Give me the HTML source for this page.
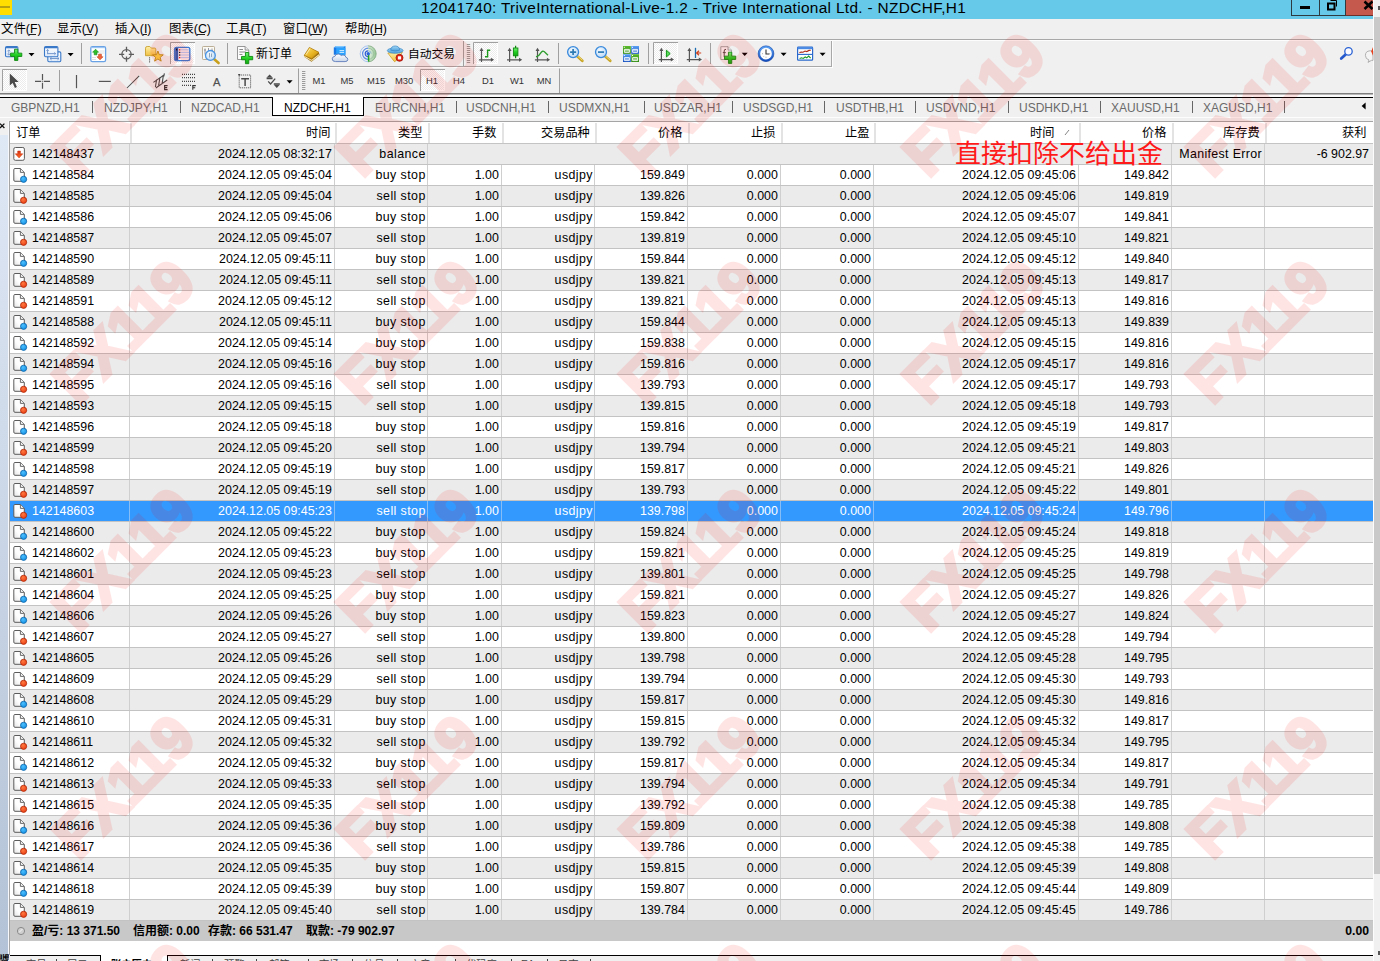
<!DOCTYPE html>
<html><head><meta charset="utf-8"><title>MT4 Terminal</title>
<style>
html,body{margin:0;padding:0}
body{width:1380px;height:961px;overflow:hidden;position:relative;background:#f0f0f0;font-family:"Liberation Sans",sans-serif;color:#000}
div,span,svg{position:absolute;box-sizing:border-box}
svg text{font-family:"Liberation Sans","Noto Sans CJK SC",sans-serif;white-space:pre}
.t{white-space:nowrap}
.title{left:0;top:0;width:1373px;height:19px;background:#67c9ea}
.title .cap{left:0;width:1387px;top:0;height:16px;line-height:16px;text-align:center;font-size:15.4px;letter-spacing:0.33px}
.row{left:10px;width:1363px;height:21px;border-bottom:1px solid #c3c3c3;font-size:12.4px;line-height:20px;white-space:nowrap}
.row.g{background:#ebebeb}
.row.w{background:#fff}
.row.s{background:#3399ff;color:#fff}
.row span{top:0;height:20px;text-align:right;padding-right:2.2px;border-right:1px solid #cfcfcf}
.row.s span{border-right-color:#86bdf6}
.row .c0{left:0;width:120px;text-align:left;padding-left:22px}
.row .c1{left:120px;width:205px}
.row .c2{left:325px;width:93px;letter-spacing:0.42px;padding-right:1.3px}
.row .c3{left:418px;width:74px}
.row .c4{left:492px;width:93px;letter-spacing:0.4px;padding-right:1.2px}
.row .c5{left:585px;width:93px}
.row .c6{left:678px;width:93px}
.row .c7{left:771px;width:93px}
.row .c8{left:864px;width:205px}
.row .c9{left:1069px;width:93px}
.row .c10{left:1162px;width:93px}
.row .c11{left:1255px;width:108px;border-right:none;padding-right:4px}
.row .m{left:418px;width:744px;border-right:1px solid #cfcfcf}
.hsep{top:123px;width:2px;height:20px;background:#e3e3e3}
.tab{top:100.6px;height:15px;line-height:15px;font-size:12px;color:#6a6a6a;white-space:nowrap}
.tsep{top:101px;width:1px;height:12px;background:#666}
.tf{top:74px;height:14px;line-height:14px;font-size:9.4px;color:#333;white-space:nowrap;text-align:center}
.wm{font-weight:bold;font-size:60px;line-height:60px;height:60px;width:220px;text-align:center;color:#f00;-webkit-text-stroke:3.6px #f00;opacity:0.102;transform:rotate(-45deg);white-space:nowrap;letter-spacing:-0.85px}
</style></head><body>
<div class="title"><div style="left:0;top:0;width:12px;height:15px;background:#ffde00"></div><div style="left:0;top:6px;width:10px;height:2px;background:#a08c14;opacity:0.75"></div><div class="cap t">12041740: TriveInternational-Live-1.2 - Trive International Ltd. - NZDCHF,H1</div><div style="left:1291px;top:0;width:29px;height:16px;border:1px solid #2d3a40;border-top:none"></div><div style="left:1319px;top:0;width:27px;height:16px;border:1px solid #2d3a40;border-top:none;border-left:none"></div><div style="left:1346px;top:0;width:27px;height:16px;background:#c5594e;border-bottom:1px solid #6b3029"></div><div style="left:1300px;top:6px;width:10px;height:3px;background:#000"></div><svg style="left:1325px;top:0" width="14" height="12" viewBox="0 0 14 12"><path d="M3 3.5h6.5v6h-6.5z" fill="none" stroke="#000" stroke-width="2"/><path d="M5.5 0.5h6v6" fill="none" stroke="#000" stroke-width="1"/></svg><svg style="left:1362px;top:0;overflow:hidden" width="11" height="12" viewBox="0 0 11 12"><path d="M2.5 1.5L10.5 9M10.5 1.5L2.5 9" stroke="#000" stroke-width="2.6" fill="none"/></svg></div><div style="left:1373px;top:0;width:1px;height:961px;background:#fcfcfc"></div><div style="left:1374px;top:0;width:6px;height:961px;background:#f0f0f0"></div><div style="left:1374px;top:17px;width:6px;height:857px;background:#c9c9c9"></div><div style="left:1378px;top:6px;width:2px;height:4px;background:#555"></div><div style="left:1378px;top:951px;width:2px;height:4px;background:#555"></div><svg style="position:absolute;left:0.60px;top:19.05px;overflow:visible" width="38.6" height="18.2" viewBox="0 -13.65 38.6 18.2"><text x="0" y="0" font-size="12.4" fill="#000">文件(F)</text></svg><div style="left:29.2px;top:34px;width:6.5px;height:1px;background:#222"></div><svg style="position:absolute;left:56.60px;top:19.05px;overflow:visible" width="38.8" height="18.2" viewBox="0 -13.65 38.8 18.2"><text x="0" y="0" font-size="12.4" fill="#000">显示(V)</text></svg><div style="left:85.2px;top:34px;width:6.7px;height:1px;background:#222"></div><svg style="position:absolute;left:114.60px;top:19.05px;overflow:visible" width="35.5" height="18.2" viewBox="0 -13.65 35.5 18.2"><text x="0" y="0" font-size="12.4" fill="#000">插入(I)</text></svg><div style="left:143.2px;top:34px;width:3.4px;height:1px;background:#222"></div><svg style="position:absolute;left:168.60px;top:19.05px;overflow:visible" width="39.6" height="18.2" viewBox="0 -13.65 39.6 18.2"><text x="0" y="0" font-size="12.4" fill="#000">图表(C)</text></svg><div style="left:197.2px;top:34px;width:7.5px;height:1px;background:#222"></div><svg style="position:absolute;left:225.60px;top:19.05px;overflow:visible" width="39.1" height="18.2" viewBox="0 -13.65 39.1 18.2"><text x="0" y="0" font-size="12.4" fill="#000">工具(T)</text></svg><div style="left:254.2px;top:34px;width:7.0px;height:1px;background:#222"></div><svg style="position:absolute;left:282.60px;top:19.05px;overflow:visible" width="42.4" height="18.2" viewBox="0 -13.65 42.4 18.2"><text x="0" y="0" font-size="12.4" fill="#000">窗口(W)</text></svg><div style="left:311.2px;top:34px;width:10.3px;height:1px;background:#222"></div><svg style="position:absolute;left:344.60px;top:19.05px;overflow:visible" width="40.6" height="18.2" viewBox="0 -13.65 40.6 18.2"><text x="0" y="0" font-size="12.4" fill="#000">帮助(H)</text></svg><div style="left:373.2px;top:34px;width:8.5px;height:1px;background:#222"></div><div style="left:0;top:39px;width:1373px;height:1px;background:#a8a8a8"></div><div style="left:0;top:40px;width:1373px;height:1px;background:#fdfdfd"></div><div style="left:0;top:66px;width:832px;height:1px;background:#a8a8a8"></div><div style="left:0;top:67px;width:833px;height:1px;background:#fdfdfd"></div><div style="left:831px;top:41px;width:1px;height:26px;background:#a8a8a8"></div><div style="left:832px;top:41px;width:1px;height:27px;background:#fdfdfd"></div><svg style="left:0;top:0" width="1380" height="96" viewBox="0 0 1380 96"><defs><pattern id="chk" width="2" height="2" patternUnits="userSpaceOnUse"><rect width="2" height="2" fill="#fff"/><rect width="1" height="1" fill="#ececec"/><rect x="1" y="1" width="1" height="1" fill="#ececec"/></pattern><linearGradient id="gp" x1="0" y1="0" x2="0" y2="1"><stop offset="0" stop-color="#7cf27c"/><stop offset="0.5" stop-color="#22d022"/><stop offset="1" stop-color="#12a812"/></linearGradient><linearGradient id="bw" x1="0" y1="0" x2="0" y2="1"><stop offset="0" stop-color="#ffffff"/><stop offset="1" stop-color="#dce9fa"/></linearGradient><linearGradient id="gold" x1="0" y1="0" x2="1" y2="1"><stop offset="0" stop-color="#fde27a"/><stop offset="0.55" stop-color="#e8b422"/><stop offset="1" stop-color="#b8820e"/></linearGradient><linearGradient id="fold" x1="0" y1="0" x2="0" y2="1"><stop offset="0" stop-color="#fff0a8"/><stop offset="1" stop-color="#f0c040"/></linearGradient><radialGradient id="lens" cx="0.4" cy="0.35" r="0.7"><stop offset="0" stop-color="#f4faff"/><stop offset="1" stop-color="#b8d8f6"/></radialGradient><linearGradient id="hat" x1="0" y1="0" x2="0" y2="1"><stop offset="0" stop-color="#a4d8f6"/><stop offset="1" stop-color="#4a9edc"/></linearGradient><linearGradient id="cld" x1="0" y1="0" x2="0" y2="1"><stop offset="0" stop-color="#ffffff"/><stop offset="1" stop-color="#c8d4e8"/></linearGradient><radialGradient id="sg" cx="0" cy="0.5" r="1"><stop offset="0" stop-color="#f4faf4"/><stop offset="1" stop-color="#8cc08c"/></radialGradient><linearGradient id="blu" x1="0" y1="0" x2="0" y2="1"><stop offset="0" stop-color="#5aa0f4"/><stop offset="1" stop-color="#1450c0"/></linearGradient><linearGradient id="grn" x1="0" y1="0" x2="0" y2="1"><stop offset="0" stop-color="#5cba2c"/><stop offset="1" stop-color="#2e8a10"/></linearGradient></defs><rect x="5.5" y="46.5" width="12.4" height="10.2" rx="1.2" fill="url(#bw)" stroke="#3a78c8" stroke-width="1.1"/><path d="M6 47.6h11.4" stroke="#3a78c8" stroke-width="1.4"/><path d="M8.8 50v5M7.3 51.4l1.5-1.6 1.5 1.6M7.3 53.6l1.5 1.6 1.5-1.6" fill="none" stroke="#7a9ac8" stroke-width="0.9"/><path d="M14.549999999999999 49.199999999999996h3.3v3.9499999999999997h3.9499999999999997v3.3h-3.9499999999999997v3.9499999999999997h-3.3v-3.9499999999999997h-3.9499999999999997v-3.3h3.9499999999999997z" fill="url(#gp)" stroke="#0e8a0e" stroke-width="0.9" stroke-linejoin="round"/><path d="M28.5 53h6l-3 3.2z" fill="#000"/><rect x="47.8" y="51.9" width="13" height="9.8" rx="1.2" fill="url(#bw)" stroke="#3a78c8" stroke-width="1.1"/><path d="M50 58.5h9M50 58.5l1.6-1.4M50 58.5l1.6 1.4M59 58.5l-1.6-1.4M59 58.5l-1.6 1.4" fill="none" stroke="#6a90c8" stroke-width="0.9"/><rect x="44.5" y="46.5" width="13.4" height="10.2" rx="1.2" fill="url(#bw)" stroke="#3a78c8" stroke-width="1.1"/><path d="M45 47.6h12.4" stroke="#3a78c8" stroke-width="1.4"/><path d="M47.6 49.6v4.6M46.4 50.8l1.2-1.3 1.2 1.3M47.6 53.6h8M54.4 52.4l1.3 1.2-1.3 1.2" fill="none" stroke="#6a90c8" stroke-width="0.9"/><path d="M67.6 53h6l-3 3.2z" fill="#000"/><path d="M81.5 43V64" stroke="#a0a0a0" stroke-width="1"/><rect x="90.8" y="46.6" width="14.8" height="15" rx="1.6" fill="#fff" stroke="#6aa2e6" stroke-width="1.3"/><path d="M91.4 47.6h13.6" stroke="#9cc4f2" stroke-width="1.2"/><path d="M99.5 51h5M99.5 53h5M92 57.5h4M92 59.5h4" stroke="#d8d8d8" stroke-width="0.8"/><path d="M95.6 49.2l3 3h-1.6v2.6h-2.8v-2.6h-1.6z" fill="#2cc02c" stroke="#148a14" stroke-width="0.6"/><path d="M100 59.8l-3-3h1.6v-2.6h2.8v2.6h1.6z" fill="#f4643c" stroke="#c03a10" stroke-width="0.6"/><circle cx="126.5" cy="54.3" r="4.6" fill="none" stroke="#5c5c5c" stroke-width="1.3"/><path d="M119 54.3h5.2M128.8 54.3h5.2M126.5 46.8v5.2M126.5 56.6v5.2" stroke="#5c5c5c" stroke-width="1.3"/><path d="M145.5 48.2q0-1.7 1.7-1.7h2.6l1.6 1.6h3.4q1 0 1 1v6.6h-10.3z" fill="url(#fold)" stroke="#c8a030" stroke-width="0.9"/><path d="M149.6 57.4v5" stroke="#333" stroke-width="1" stroke-dasharray="1 1"/><polygon points="157.90,51.00 159.31,54.66 163.23,54.87 160.18,57.34 161.19,61.13 157.90,59.00 154.61,61.13 155.62,57.34 152.57,54.87 156.49,54.66" fill="#f8d248" stroke="#b88a14" stroke-width="0.9" stroke-linejoin="round"/><rect x="170" y="42" width="25" height="22" fill="url(#chk)"/><path d="M170.5 64V42.5H195" fill="none" stroke="#a0a0a0" stroke-width="1"/><path d="M194.5 43V63.5H171" fill="none" stroke="#fff" stroke-width="1"/><rect x="174.6" y="47.4" width="15.2" height="13.2" rx="1.8" fill="#fbeeee" stroke="#3a7ad4" stroke-width="1.4"/><rect x="175.2" y="48" width="3" height="12" fill="#2c5cb4"/><path d="M180.5 49.8h8.6M180.5 52.4h8.6M180.5 55h8.6M180.5 57.6h8.6" stroke="#a8c0f4" stroke-width="0.9"/><rect x="179" y="49.2" width="1.3" height="1.3" fill="#e02020"/><rect x="179" y="51.8" width="1.3" height="1.3" fill="#222"/><rect x="179" y="54.4" width="1.3" height="1.3" fill="#222"/><rect x="179" y="57" width="1.3" height="1.3" fill="#e02020"/><rect x="176" y="48.8" width="1.2" height="1.6" fill="#111"/><rect x="202.5" y="46.5" width="12" height="13" rx="0.8" fill="#fbfaf4" stroke="#b4a68c" stroke-width="0.9"/><path d="M205 48.5v6M208.5 48v4M212 48.5v5M204 50h2M211 50.5h2" stroke="#8a8a96" stroke-width="0.9"/><path d="M214 59l4.6 4" stroke="#c8a01c" stroke-width="2.6" stroke-linecap="round"/><circle cx="210.4" cy="55.4" r="4.9" fill="url(#lens)" fill-opacity="0.88" stroke="#4a94e4" stroke-width="1.3"/><path d="M209.5 53v4.5M211.5 53.5v3.5" stroke="#8aa4c0" stroke-width="1"/><path d="M227.5 43V64" stroke="#a0a0a0" stroke-width="1"/><path d="M237.5 46.5h7.6l3.6 3.6v9.4h-11.2z" fill="#fcfcfc" stroke="#8c8c8c" stroke-width="0.9"/><path d="M245.1 46.5v3.6h3.6" fill="#e8e8e8" stroke="#8c8c8c" stroke-width="0.9"/><path d="M239.4 49.5h3.6M239.4 52h6.5M239.4 54.5h3" stroke="#8a8a8a" stroke-width="1"/><path d="M245.45 52.5h3.3v3.9499999999999997h3.9499999999999997v3.3h-3.9499999999999997v3.9499999999999997h-3.3v-3.9499999999999997h-3.9499999999999997v-3.3h3.9499999999999997z" fill="url(#gp)" stroke="#0e8a0e" stroke-width="0.9" stroke-linejoin="round"/><path d="M304.1 55.6l5.3-8.2 9.3 4.7 1 3.2-8.2 6.4-7.4-5z" fill="#9a6a0c"/><path d="M304.3 56.2l7.4 4.2 7.4-5.6" fill="none" stroke="#f6e6b0" stroke-width="1.1"/><path d="M309.4 47.4l9.3 4.8-6.9 6.5-7.5-3.4z" fill="url(#gold)" stroke="#b07c0c" stroke-width="0.6" stroke-linejoin="round"/><path d="M310 48.6l-4 6" stroke="#fff4c0" stroke-width="0.8"/><path d="M333.8 47.4l2.4-1.3h9.2v8.6h-11.6z" fill="#1c78e4"/><path d="M336.2 47.6h9.2v8h-9.2z" fill="#2aa2ff"/><path d="M333.8 47.4l2.4-1.3h9.2l-2 1.4z" fill="#7cc8ff"/><path d="M339.5 50.6h4.6M339.5 52.4h4.6" stroke="#e4f4ff" stroke-width="0.9"/><path d="M335.6 61.6q-3.4 0-3.4-2.7 0-2.3 2.7-2.6 0.7-2.3 3.3-2.3 2 0 3 1.5 0.9-0.5 1.9-0.5 2.5 0 2.8 2.3 1.9 0.4 1.9 2.1 0 2.2-2.7 2.2z" fill="url(#cld)" stroke="#5c7cba" stroke-width="0.9"/><path d="M368.2 45.8a8 8 0 0 1 0 16z" fill="url(#sg)"/><g fill="none"><path d="M368.2 45.8a8 8 0 0 0 0 16" stroke="#a8c4f0" stroke-width="1"/><path d="M368.2 48.2a5.6 5.6 0 0 0 0 11.2" stroke="#5a8ae4" stroke-width="1.2"/><path d="M368.2 50.8a3 3 0 0 0 0 6" stroke="#2a5cd4" stroke-width="1.2"/><path d="M368.2 45.8a8 8 0 0 1 0 16" stroke="#8ab08a" stroke-width="0.9"/><path d="M368.2 48.2a5.6 5.6 0 0 1 0 11.2" stroke="#9cc09c" stroke-width="0.9"/><path d="M368.2 50.8a3 3 0 0 1 3 3" stroke="#8ab4c8" stroke-width="0.9"/><path d="M368.6 54v7.6" stroke="#22a422" stroke-width="1.5"/></g><circle cx="368.2" cy="53.8" r="1.7" fill="#2a60d8"/><path d="M387.8 53l6.3 8.3q0.6 0.7 1.3 0l7-9z" fill="url(#fold)" stroke="#c89a18" stroke-width="0.7"/><ellipse cx="395.2" cy="50.6" rx="7.9" ry="2.7" fill="url(#hat)" stroke="#3a86c4" stroke-width="0.7"/><path d="M390.7 50.2q0.3-4.2 4.5-4.2t4.5 4.2q-4.5 1.7-9 0z" fill="url(#hat)" stroke="#3a86c4" stroke-width="0.7"/><circle cx="399.5" cy="57.8" r="3.5" fill="#e42414" stroke="#a01206" stroke-width="0.8"/><rect x="397.9" y="56.2" width="3.2" height="3.2" rx="0.4" fill="#fff"/><path d="M463.5 41V66" stroke="#a0a0a0" stroke-width="1"/><path d="M466.8 44.5h3.4M466.8 46.5h3.4M466.8 48.5h3.4M466.8 50.5h3.4M466.8 52.5h3.4M466.8 54.5h3.4M466.8 56.5h3.4M466.8 58.5h3.4M466.8 60.5h3.4M466.8 62.5h3.4" stroke="#9a9a9a" stroke-width="1"/><rect x="473" y="42" width="25" height="22" fill="url(#chk)"/><path d="M473.5 64V42.5H498" fill="none" stroke="#a0a0a0" stroke-width="1"/><path d="M497.5 43V63.5H474" fill="none" stroke="#fff" stroke-width="1"/><path d="M481.5 49.5V62M478.9 59.8H492.0" fill="none" stroke="#555" stroke-width="1.2"/><path d="M479.5 51L481.5 47.8L483.5 51zM490.9 57.8L494.1 59.8L490.9 61.8z" fill="#555"/><path d="M487.6 49.6v8M487.6 50.2h2.6M487.6 56.8h-2.6" fill="none" stroke="#1c9a1c" stroke-width="1.4"/><path d="M509.6 49.5V62M507.0 59.8H520.1" fill="none" stroke="#555" stroke-width="1.2"/><path d="M507.6 51L509.6 47.8L511.6 51zM519.0 57.8L522.2 59.8L519.0 61.8z" fill="#555"/><path d="M515.6 45.8v12.4" stroke="#0e8a0e" stroke-width="1.2"/><rect x="513.4" y="48" width="4.5" height="7.8" fill="url(#gp)" stroke="#0e8a0e" stroke-width="0.9"/><path d="M537.5 49.5V62M534.9 59.8H548.0" fill="none" stroke="#555" stroke-width="1.2"/><path d="M535.5 51L537.5 47.8L539.5 51zM546.9 57.8L550.1 59.8L546.9 61.8z" fill="#555"/><path d="M536 56.8q3.4-1 5.2-4.4 1.4-2 3.2-0.6l3.6 3.4" fill="none" stroke="#2c9c2c" stroke-width="1.3"/><path d="M558.5 43V64" stroke="#a0a0a0" stroke-width="1"/><path d="M576.7 55.8l5.6 5" stroke="#c8a424" stroke-width="2.8" stroke-linecap="round"/><path d="M577.1 55.6l5 4.4" stroke="#f0dc7c" stroke-width="0.9" stroke-linecap="round"/><circle cx="573.1" cy="52.1" r="5.5" fill="url(#lens)" stroke="#3a8adc" stroke-width="1.3"/><path d="M570.1 52.1h6M573.1 49.1v6" stroke="#2c7ab4" stroke-width="1.7"/><path d="M604.6 55.8l5.6 5" stroke="#c8a424" stroke-width="2.8" stroke-linecap="round"/><path d="M605.0 55.6l5 4.4" stroke="#f0dc7c" stroke-width="0.9" stroke-linecap="round"/><circle cx="601.0" cy="52.1" r="5.5" fill="url(#lens)" stroke="#3a8adc" stroke-width="1.3"/><path d="M598.0 52.1h6" stroke="#2c7ab4" stroke-width="1.7"/><rect x="623" y="46" width="7.8" height="7.8" fill="url(#grn)"/><path d="M624.4 49.4h5v3h-5zM624.4 50.9h5" fill="none" stroke="#fff" stroke-width="0.9"/><rect x="623.8" y="46.8" width="1" height="1" fill="#fff"/><rect x="631.2" y="46" width="7.8" height="7.8" fill="url(#blu)"/><path d="M632.6 49.4h5v3h-5zM632.6 50.9h5" fill="none" stroke="#fff" stroke-width="0.9"/><rect x="632.0" y="46.8" width="1" height="1" fill="#fff"/><rect x="623" y="54.2" width="7.8" height="7.8" fill="url(#blu)"/><path d="M624.4 57.6h5v3h-5zM624.4 59.1h5" fill="none" stroke="#fff" stroke-width="0.9"/><rect x="623.8" y="55.0" width="1" height="1" fill="#fff"/><rect x="631.2" y="54.2" width="7.8" height="7.8" fill="url(#grn)"/><path d="M632.6 57.6h5v3h-5zM632.6 59.1h5" fill="none" stroke="#fff" stroke-width="0.9"/><rect x="632.0" y="55.0" width="1" height="1" fill="#fff"/><path d="M648.5 43V64" stroke="#a0a0a0" stroke-width="1"/><rect x="653" y="42" width="25" height="22" fill="url(#chk)"/><path d="M653.5 64V42.5H678" fill="none" stroke="#a0a0a0" stroke-width="1"/><path d="M677.5 43V63.5H654" fill="none" stroke="#fff" stroke-width="1"/><path d="M661.4 49.5V62M658.8 59.6H671.9" fill="none" stroke="#555" stroke-width="1.2"/><path d="M659.4 51L661.4 47.8L663.4 51zM670.8 57.6L674.0 59.6L670.8 61.6z" fill="#555"/><path d="M666.4 50.2v6.8l3.8-3.4z" fill="#5ade5a" stroke="#14961a" stroke-width="1"/><path d="M689.4 49.5V62M686.8 59.6H699.9" fill="none" stroke="#555" stroke-width="1.2"/><path d="M687.4 51L689.4 47.8L691.4 51zM698.8 57.6L702.0 59.6L698.8 61.6z" fill="#555"/><path d="M695.5 47.8v10.2" stroke="#1c6ab0" stroke-width="1.3"/><path d="M696.8 53h4.4M699 50.8l-2.4 2.2 2.4 2.2" fill="none" stroke="#d0401c" stroke-width="1.2"/><path d="M710.5 43V64" stroke="#a0a0a0" stroke-width="1"/><path d="M720.8 46.7h7.2l3.4 3.4v9.4h-10.6z" fill="#faf4f4" stroke="#9a9a9a" stroke-width="0.9"/><path d="M728 46.7v3.4h3.4" fill="#e8e8e8" stroke="#9a9a9a" stroke-width="0.9"/><path d="M726 49.4q-1.8-0.4-1.8 1.6v6M722.8 52.6h3" fill="none" stroke="#5a4a4a" stroke-width="1"/><path d="M728.45 52.199999999999996h3.3v3.9499999999999997h3.9499999999999997v3.3h-3.9499999999999997v3.9499999999999997h-3.3v-3.9499999999999997h-3.9499999999999997v-3.3h3.9499999999999997z" fill="url(#gp)" stroke="#0e8a0e" stroke-width="0.9" stroke-linejoin="round"/><path d="M741.7 52.8h6l-3 3.2z" fill="#000"/><circle cx="766" cy="53.7" r="6.9" fill="#fdfdfd" stroke="url(#blu)" stroke-width="2.1"/><circle cx="766" cy="53.7" r="7.9" fill="none" stroke="#0c3c9c" stroke-width="0.5"/><path d="M766 49.4v4.6h3.4" fill="none" stroke="#333" stroke-width="1.1"/><path d="M762 53.7h0.8M766 57.6v-0.8M769.4 53.7h0.8M763.4 56.8l0.5-0.5" stroke="#888" stroke-width="0.8"/><path d="M780.6 52.8h6l-3 3.2z" fill="#000"/><rect x="797.6" y="47.2" width="15" height="13" rx="0.8" fill="#fff" stroke="#2a68cc" stroke-width="1.2"/><path d="M797.6 48.2h15" stroke="#4a8ae4" stroke-width="2"/><path d="M797.6 54.4h15" stroke="#2a68cc" stroke-width="1.1"/><path d="M799.4 52.6l2-0.6 1.6 0.2 2-1.2 1.8 0.6 2.2-1.2 1.8-0.2" fill="none" stroke="#b02a14" stroke-width="1.1"/><path d="M799.6 58.6l2-0.8 1.6 0.6 2-1.4 1.6 0.8 1.8-1.8 2 2" fill="none" stroke="#1c9c2c" stroke-width="1.1"/><path d="M819.6 52.8h6l-3 3.2z" fill="#000"/><path d="M1345.6 54.4l-4.4 4.2" stroke="#2458cc" stroke-width="2.7" stroke-linecap="round"/><circle cx="1348.5" cy="51.4" r="3.7" fill="#fbfbff" stroke="#2a62d4" stroke-width="1.3"/><path d="M1373 50.8h-3q-4.6 0.4-4.6 4.6 0 3.6 3.6 4.6l-1 2.4 3.4-2h1.6z" fill="#f4f4f4" stroke="#a8a8a8" stroke-width="0.9"/><path d="M1373 47l-1.8 4.6 1.8 4.2z" fill="#e8401c"/><rect x="2" y="69" width="25" height="22" fill="url(#chk)"/><path d="M2.5 91V69.5H27" fill="none" stroke="#a0a0a0" stroke-width="1"/><path d="M26.5 70V90.5H3" fill="none" stroke="#fff" stroke-width="1"/><path d="M9.8 73.6v12l2.9-2.7 2.2 5 2-0.9-2.2-4.9h4z" fill="#4a4a4a"/><path d="M35 81.4h6.2M43.8 81.4h6.2M42.5 74v6.2M42.5 82.8v6" stroke="#555" stroke-width="1.2"/><rect x="42" y="81" width="1" height="1" fill="#888"/><path d="M59.5 70V91" stroke="#a0a0a0" stroke-width="1"/><path d="M76.5 75v13.2" stroke="#555" stroke-width="1.2"/><path d="M98.8 81.4h12" stroke="#555" stroke-width="1.2"/><path d="M127 88l12.2-12.2" stroke="#4a4a4a" stroke-width="1.05"/><path d="M153.4 82.4l11-7.6M155.8 88l11.4-8M156.6 79.6l-1.2 7.4M160 77.4l-1.4 8M163.4 75.2l-1.2 8M164.4 73.4l-0.6 3" fill="none" stroke="#4a4a4a" stroke-width="1.1"/><path d="M167.6 85.6h-3v4h3M164.6 87.6h2.6" fill="none" stroke="#333" stroke-width="1.1"/><path d="M182 74.4h13M182 77.6h13M182 81.4h13M182 85.4h9.4" stroke="#444" stroke-width="1.1" stroke-dasharray="1 1"/><path d="M192.8 89.8v-4.2h3M192.8 87.7h2.4" fill="none" stroke="#333" stroke-width="1.1"/><rect x="239.2" y="75" width="11.4" height="12.8" fill="none" stroke="#444" stroke-width="1" stroke-dasharray="1 1"/><rect x="238.2" y="74" width="2" height="1.4" fill="#444"/><path d="M241.2 78.7h7.8M245.1 78.7v7.2" stroke="#4a4a4a" stroke-width="1.5"/><path d="M269.6 74.4l3 3.2h-6zM276.8 88l-3-3.2h6z" fill="#4a4a4a"/><path d="M266.6 77.6h6v1.6h-6zM273.8 83.2h6v1.6h-6z" fill="#4a4a4a"/><path d="M268.2 81.4l2.4 2.6 4.6-5.4" fill="none" stroke="#4a4a4a" stroke-width="1.3"/><path d="M286.6 80.2h6l-3 3.2z" fill="#000"/><path d="M298.5 68.5V93" stroke="#a0a0a0" stroke-width="1"/><path d="M302 71.5h3.4M302 73.5h3.4M302 75.5h3.4M302 77.5h3.4M302 79.5h3.4M302 81.5h3.4M302 83.5h3.4M302 85.5h3.4M302 87.5h3.4M302 89.5h3.4" stroke="#9a9a9a" stroke-width="1"/><rect x="420" y="69" width="25" height="22" fill="url(#chk)"/><path d="M420.5 91V69.5H445" fill="none" stroke="#a0a0a0" stroke-width="1"/><path d="M444.5 70V90.5H421" fill="none" stroke="#fff" stroke-width="1"/><path d="M559.5 68.5V93" stroke="#a0a0a0" stroke-width="1"/></svg><svg width="0" height="0" style="left:0;top:0"><defs><linearGradient id="pg" x1="1" y1="0" x2="0" y2="1"><stop offset="0" stop-color="#fff"/><stop offset="0.6" stop-color="#fdfdfd"/><stop offset="1" stop-color="#e2e2e2"/></linearGradient><radialGradient id="bc" cx="0.4" cy="0.35" r="0.75"><stop offset="0" stop-color="#4cc0ff"/><stop offset="1" stop-color="#108ae0"/></radialGradient><radialGradient id="rc" cx="0.4" cy="0.35" r="0.75"><stop offset="0" stop-color="#ff7a40"/><stop offset="1" stop-color="#e83810"/></radialGradient><linearGradient id="ra" x1="0" y1="0" x2="0" y2="1"><stop offset="0" stop-color="#d83010"/><stop offset="1" stop-color="#ff6a28"/></linearGradient></defs></svg><div class="t" style="left:210.7px;top:74px;width:12px;height:16px;line-height:16px;text-align:center;font-size:11.2px;color:#505050;-webkit-text-stroke:0.25px #505050">A</div><svg style="position:absolute;left:255.60px;top:44.70px;overflow:visible" width="36.3" height="16.9" viewBox="0 -12.71 36.3 16.9"><text x="0" y="0" font-size="12" fill="#000">新订单</text></svg><svg style="position:absolute;left:408.20px;top:44.70px;overflow:visible" width="47.4" height="16.9" viewBox="0 -12.71 47.4 16.9"><text x="0" y="0" font-size="11.8" fill="#000">自动交易</text></svg><div class="tf" style="left:304px;width:30px">M1</div><div class="tf" style="left:332px;width:30px">M5</div><div class="tf" style="left:361px;width:30px">M15</div><div class="tf" style="left:389px;width:30px">M30</div><div class="tf" style="left:417px;width:30px">H1</div><div class="tf" style="left:444px;width:30px">H4</div><div class="tf" style="left:473px;width:30px">D1</div><div class="tf" style="left:502px;width:30px">W1</div><div class="tf" style="left:529px;width:30px">MN</div><div style="left:0;top:93px;width:1373px;height:1px;background:#7f7f7f"></div><div style="left:0;top:94px;width:1373px;height:1px;background:#b9b9b9"></div><div style="left:0;top:95px;width:1373px;height:2px;background:#fbfbfb"></div><div style="left:0;top:97px;width:1373px;height:1px;background:#000"></div><div style="left:0;top:117px;width:1373px;height:1px;background:#fdfdfd"></div><div style="left:273px;top:95px;width:90px;height:3px;background:#fff"></div><div style="left:272px;top:97px;width:92px;height:19px;background:#fff;border:1px solid #000;border-top:none"></div><div class="tab" style="left:11px;">GBPNZD,H1</div><div class="tab" style="left:104px;">NZDJPY,H1</div><div class="tab" style="left:191px;">NZDCAD,H1</div><div class="tab" style="left:284px;color:#000;">NZDCHF,H1</div><div class="tab" style="left:375px;">EURCNH,H1</div><div class="tab" style="left:466px;">USDCNH,H1</div><div class="tab" style="left:559px;">USDMXN,H1</div><div class="tab" style="left:654px;">USDZAR,H1</div><div class="tab" style="left:743px;">USDSGD,H1</div><div class="tab" style="left:836px;">USDTHB,H1</div><div class="tab" style="left:926px;">USDVND,H1</div><div class="tab" style="left:1019px;">USDHKD,H1</div><div class="tab" style="left:1111px;">XAUUSD,H1</div><div class="tab" style="left:1203px;">XAGUSD,H1</div><div class="tsep" style="left:92px"></div><div class="tsep" style="left:180px"></div><div class="tsep" style="left:456px"></div><div class="tsep" style="left:548px"></div><div class="tsep" style="left:644px"></div><div class="tsep" style="left:732px"></div><div class="tsep" style="left:824px"></div><div class="tsep" style="left:915px"></div><div class="tsep" style="left:1008px"></div><div class="tsep" style="left:1100px"></div><div class="tsep" style="left:1192px"></div><div class="tsep" style="left:1284px"></div><svg style="left:1361px;top:102px" width="6" height="8" viewBox="0 0 6 8"><path d="M4.6 0.6L0.6 4L4.6 7.4z" fill="#000"/></svg><div style="left:0;top:135px;width:8px;height:826px;background:linear-gradient(#dfe8f5,#b3c2d6)"></div><div style="left:8px;top:121px;width:1px;height:840px;background:#f6f8fb"></div><svg style="left:0;top:121px" width="8" height="10" viewBox="0 0 8 10"><path d="M0 2.6L4.4 7M4.4 2.6L0 7" stroke="#111" stroke-width="1.3" fill="none"/></svg><div style="left:9px;top:121px;width:1364px;height:834px;background:#fff;border-left:1px solid #a5a5a5;border-top:1px solid #a5a5a5"></div><div style="left:10px;top:143px;width:1363px;height:1px;background:#c4c4c4"></div><svg style="position:absolute;left:16.00px;top:123.76px;overflow:visible" width="24.4" height="17.9" viewBox="0 -13.44 24.4 17.9"><text x="0" y="0" font-size="12.2" fill="#000">订单</text></svg><svg style="position:absolute;left:305.60px;top:123.76px;overflow:visible" width="24.4" height="17.9" viewBox="0 -13.44 24.4 17.9"><text x="0" y="0" font-size="12.2" fill="#000">时间</text></svg><svg style="position:absolute;left:398.30px;top:123.76px;overflow:visible" width="24.4" height="17.9" viewBox="0 -13.44 24.4 17.9"><text x="0" y="0" font-size="12.2" fill="#000">类型</text></svg><svg style="position:absolute;left:472.20px;top:123.76px;overflow:visible" width="24.4" height="17.9" viewBox="0 -13.44 24.4 17.9"><text x="0" y="0" font-size="12.2" fill="#000">手数</text></svg><svg style="position:absolute;left:541.20px;top:123.76px;overflow:visible" width="48.8" height="17.9" viewBox="0 -13.44 48.8 17.9"><text x="0" y="0" font-size="12.2" fill="#000">交易品种</text></svg><svg style="position:absolute;left:658.30px;top:123.76px;overflow:visible" width="24.4" height="17.9" viewBox="0 -13.44 24.4 17.9"><text x="0" y="0" font-size="12.2" fill="#000">价格</text></svg><svg style="position:absolute;left:751.30px;top:123.76px;overflow:visible" width="24.4" height="17.9" viewBox="0 -13.44 24.4 17.9"><text x="0" y="0" font-size="12.2" fill="#000">止损</text></svg><svg style="position:absolute;left:844.90px;top:123.76px;overflow:visible" width="24.4" height="17.9" viewBox="0 -13.44 24.4 17.9"><text x="0" y="0" font-size="12.2" fill="#000">止盈</text></svg><svg style="position:absolute;left:1029.60px;top:123.76px;overflow:visible" width="24.4" height="17.9" viewBox="0 -13.44 24.4 17.9"><text x="0" y="0" font-size="12.2" fill="#000">时间</text></svg><svg style="position:absolute;left:1142.10px;top:123.76px;overflow:visible" width="24.4" height="17.9" viewBox="0 -13.44 24.4 17.9"><text x="0" y="0" font-size="12.2" fill="#000">价格</text></svg><svg style="position:absolute;left:1223.40px;top:123.76px;overflow:visible" width="36.6" height="17.9" viewBox="0 -13.44 36.6 17.9"><text x="0" y="0" font-size="12.2" fill="#000">库存费</text></svg><svg style="position:absolute;left:1341.90px;top:123.76px;overflow:visible" width="24.4" height="17.9" viewBox="0 -13.44 24.4 17.9"><text x="0" y="0" font-size="12.2" fill="#000">获利</text></svg><div class="hsep" style="left:130px"></div><div class="hsep" style="left:335px"></div><div class="hsep" style="left:428px"></div><div class="hsep" style="left:502px"></div><div class="hsep" style="left:595px"></div><div class="hsep" style="left:688px"></div><div class="hsep" style="left:781px"></div><div class="hsep" style="left:874px"></div><div class="hsep" style="left:1079px"></div><div class="hsep" style="left:1172px"></div><div class="hsep" style="left:1265px"></div><svg style="left:1064px;top:129px" width="6" height="7" viewBox="0 0 6 7"><path d="M1 6L5 1" stroke="#777" stroke-width="0.9"/></svg><div class="row g" style="top:144px"><svg style="left:2px;top:2px" width="17" height="17" viewBox="0 0 17 17"><rect x="1.8" y="1.5" width="10.6" height="12.8" rx="1.6" fill="#fff" stroke="#5c5c5c"/><path d="M5.7 5h2.7v2.8h2.4l-3.75 4.1-3.75-4.1h2.4z" fill="url(#ra)" stroke="#c02c08" stroke-width="0.5"/></svg><span class="c0">142148437</span><span class="c1">2024.12.05 08:32:17</span><span class="c2">balance</span><span class="m"></span><span class="c10" style="padding-right:2px;letter-spacing:0.35px">Manifest Error</span><span class="c11">-6 902.97</span></div>
<div class="row w" style="top:165px"><svg style="left:2px;top:2px" width="17" height="17" viewBox="0 0 17 17"><path d="M3 1.5h5.4l3.9 3.9v7.7q0 1.2-1.2 1.2h-8.1q-1.2 0-1.2-1.2v-10.4q0-1.2 1.2-1.2z" fill="url(#pg)" stroke="#5c5c5c"/><path d="M8.4 1.7v3.7h3.7" fill="#f4f4f4" stroke="#5c5c5c" stroke-width="0.9"/><circle cx="11.6" cy="12.3" r="3.1" fill="url(#bc)" stroke="#0c64a8" stroke-width="0.8"/></svg><span class="c0">142148584</span><span class="c1">2024.12.05 09:45:04</span><span class="c2">buy stop</span><span class="c3">1.00</span><span class="c4">usdjpy</span><span class="c5">159.849</span><span class="c6">0.000</span><span class="c7">0.000</span><span class="c8">2024.12.05 09:45:06</span><span class="c9">149.842</span><span class="c10"></span><span class="c11"></span></div>
<div class="row g" style="top:186px"><svg style="left:2px;top:2px" width="17" height="17" viewBox="0 0 17 17"><path d="M3 1.5h5.4l3.9 3.9v7.7q0 1.2-1.2 1.2h-8.1q-1.2 0-1.2-1.2v-10.4q0-1.2 1.2-1.2z" fill="url(#pg)" stroke="#5c5c5c"/><path d="M8.4 1.7v3.7h3.7" fill="#f4f4f4" stroke="#5c5c5c" stroke-width="0.9"/><circle cx="11.6" cy="12.3" r="3.1" fill="url(#rc)" stroke="#b02808" stroke-width="0.8"/></svg><span class="c0">142148585</span><span class="c1">2024.12.05 09:45:04</span><span class="c2">sell stop</span><span class="c3">1.00</span><span class="c4">usdjpy</span><span class="c5">139.826</span><span class="c6">0.000</span><span class="c7">0.000</span><span class="c8">2024.12.05 09:45:06</span><span class="c9">149.819</span><span class="c10"></span><span class="c11"></span></div>
<div class="row w" style="top:207px"><svg style="left:2px;top:2px" width="17" height="17" viewBox="0 0 17 17"><path d="M3 1.5h5.4l3.9 3.9v7.7q0 1.2-1.2 1.2h-8.1q-1.2 0-1.2-1.2v-10.4q0-1.2 1.2-1.2z" fill="url(#pg)" stroke="#5c5c5c"/><path d="M8.4 1.7v3.7h3.7" fill="#f4f4f4" stroke="#5c5c5c" stroke-width="0.9"/><circle cx="11.6" cy="12.3" r="3.1" fill="url(#bc)" stroke="#0c64a8" stroke-width="0.8"/></svg><span class="c0">142148586</span><span class="c1">2024.12.05 09:45:06</span><span class="c2">buy stop</span><span class="c3">1.00</span><span class="c4">usdjpy</span><span class="c5">159.842</span><span class="c6">0.000</span><span class="c7">0.000</span><span class="c8">2024.12.05 09:45:07</span><span class="c9">149.841</span><span class="c10"></span><span class="c11"></span></div>
<div class="row g" style="top:228px"><svg style="left:2px;top:2px" width="17" height="17" viewBox="0 0 17 17"><path d="M3 1.5h5.4l3.9 3.9v7.7q0 1.2-1.2 1.2h-8.1q-1.2 0-1.2-1.2v-10.4q0-1.2 1.2-1.2z" fill="url(#pg)" stroke="#5c5c5c"/><path d="M8.4 1.7v3.7h3.7" fill="#f4f4f4" stroke="#5c5c5c" stroke-width="0.9"/><circle cx="11.6" cy="12.3" r="3.1" fill="url(#rc)" stroke="#b02808" stroke-width="0.8"/></svg><span class="c0">142148587</span><span class="c1">2024.12.05 09:45:07</span><span class="c2">sell stop</span><span class="c3">1.00</span><span class="c4">usdjpy</span><span class="c5">139.819</span><span class="c6">0.000</span><span class="c7">0.000</span><span class="c8">2024.12.05 09:45:10</span><span class="c9">149.821</span><span class="c10"></span><span class="c11"></span></div>
<div class="row w" style="top:249px"><svg style="left:2px;top:2px" width="17" height="17" viewBox="0 0 17 17"><path d="M3 1.5h5.4l3.9 3.9v7.7q0 1.2-1.2 1.2h-8.1q-1.2 0-1.2-1.2v-10.4q0-1.2 1.2-1.2z" fill="url(#pg)" stroke="#5c5c5c"/><path d="M8.4 1.7v3.7h3.7" fill="#f4f4f4" stroke="#5c5c5c" stroke-width="0.9"/><circle cx="11.6" cy="12.3" r="3.1" fill="url(#bc)" stroke="#0c64a8" stroke-width="0.8"/></svg><span class="c0">142148590</span><span class="c1">2024.12.05 09:45:11</span><span class="c2">buy stop</span><span class="c3">1.00</span><span class="c4">usdjpy</span><span class="c5">159.844</span><span class="c6">0.000</span><span class="c7">0.000</span><span class="c8">2024.12.05 09:45:12</span><span class="c9">149.840</span><span class="c10"></span><span class="c11"></span></div>
<div class="row g" style="top:270px"><svg style="left:2px;top:2px" width="17" height="17" viewBox="0 0 17 17"><path d="M3 1.5h5.4l3.9 3.9v7.7q0 1.2-1.2 1.2h-8.1q-1.2 0-1.2-1.2v-10.4q0-1.2 1.2-1.2z" fill="url(#pg)" stroke="#5c5c5c"/><path d="M8.4 1.7v3.7h3.7" fill="#f4f4f4" stroke="#5c5c5c" stroke-width="0.9"/><circle cx="11.6" cy="12.3" r="3.1" fill="url(#rc)" stroke="#b02808" stroke-width="0.8"/></svg><span class="c0">142148589</span><span class="c1">2024.12.05 09:45:11</span><span class="c2">sell stop</span><span class="c3">1.00</span><span class="c4">usdjpy</span><span class="c5">139.821</span><span class="c6">0.000</span><span class="c7">0.000</span><span class="c8">2024.12.05 09:45:13</span><span class="c9">149.817</span><span class="c10"></span><span class="c11"></span></div>
<div class="row w" style="top:291px"><svg style="left:2px;top:2px" width="17" height="17" viewBox="0 0 17 17"><path d="M3 1.5h5.4l3.9 3.9v7.7q0 1.2-1.2 1.2h-8.1q-1.2 0-1.2-1.2v-10.4q0-1.2 1.2-1.2z" fill="url(#pg)" stroke="#5c5c5c"/><path d="M8.4 1.7v3.7h3.7" fill="#f4f4f4" stroke="#5c5c5c" stroke-width="0.9"/><circle cx="11.6" cy="12.3" r="3.1" fill="url(#rc)" stroke="#b02808" stroke-width="0.8"/></svg><span class="c0">142148591</span><span class="c1">2024.12.05 09:45:12</span><span class="c2">sell stop</span><span class="c3">1.00</span><span class="c4">usdjpy</span><span class="c5">139.821</span><span class="c6">0.000</span><span class="c7">0.000</span><span class="c8">2024.12.05 09:45:13</span><span class="c9">149.816</span><span class="c10"></span><span class="c11"></span></div>
<div class="row g" style="top:312px"><svg style="left:2px;top:2px" width="17" height="17" viewBox="0 0 17 17"><path d="M3 1.5h5.4l3.9 3.9v7.7q0 1.2-1.2 1.2h-8.1q-1.2 0-1.2-1.2v-10.4q0-1.2 1.2-1.2z" fill="url(#pg)" stroke="#5c5c5c"/><path d="M8.4 1.7v3.7h3.7" fill="#f4f4f4" stroke="#5c5c5c" stroke-width="0.9"/><circle cx="11.6" cy="12.3" r="3.1" fill="url(#bc)" stroke="#0c64a8" stroke-width="0.8"/></svg><span class="c0">142148588</span><span class="c1">2024.12.05 09:45:11</span><span class="c2">buy stop</span><span class="c3">1.00</span><span class="c4">usdjpy</span><span class="c5">159.844</span><span class="c6">0.000</span><span class="c7">0.000</span><span class="c8">2024.12.05 09:45:13</span><span class="c9">149.839</span><span class="c10"></span><span class="c11"></span></div>
<div class="row w" style="top:333px"><svg style="left:2px;top:2px" width="17" height="17" viewBox="0 0 17 17"><path d="M3 1.5h5.4l3.9 3.9v7.7q0 1.2-1.2 1.2h-8.1q-1.2 0-1.2-1.2v-10.4q0-1.2 1.2-1.2z" fill="url(#pg)" stroke="#5c5c5c"/><path d="M8.4 1.7v3.7h3.7" fill="#f4f4f4" stroke="#5c5c5c" stroke-width="0.9"/><circle cx="11.6" cy="12.3" r="3.1" fill="url(#bc)" stroke="#0c64a8" stroke-width="0.8"/></svg><span class="c0">142148592</span><span class="c1">2024.12.05 09:45:14</span><span class="c2">buy stop</span><span class="c3">1.00</span><span class="c4">usdjpy</span><span class="c5">159.838</span><span class="c6">0.000</span><span class="c7">0.000</span><span class="c8">2024.12.05 09:45:15</span><span class="c9">149.816</span><span class="c10"></span><span class="c11"></span></div>
<div class="row g" style="top:354px"><svg style="left:2px;top:2px" width="17" height="17" viewBox="0 0 17 17"><path d="M3 1.5h5.4l3.9 3.9v7.7q0 1.2-1.2 1.2h-8.1q-1.2 0-1.2-1.2v-10.4q0-1.2 1.2-1.2z" fill="url(#pg)" stroke="#5c5c5c"/><path d="M8.4 1.7v3.7h3.7" fill="#f4f4f4" stroke="#5c5c5c" stroke-width="0.9"/><circle cx="11.6" cy="12.3" r="3.1" fill="url(#bc)" stroke="#0c64a8" stroke-width="0.8"/></svg><span class="c0">142148594</span><span class="c1">2024.12.05 09:45:16</span><span class="c2">buy stop</span><span class="c3">1.00</span><span class="c4">usdjpy</span><span class="c5">159.816</span><span class="c6">0.000</span><span class="c7">0.000</span><span class="c8">2024.12.05 09:45:17</span><span class="c9">149.816</span><span class="c10"></span><span class="c11"></span></div>
<div class="row w" style="top:375px"><svg style="left:2px;top:2px" width="17" height="17" viewBox="0 0 17 17"><path d="M3 1.5h5.4l3.9 3.9v7.7q0 1.2-1.2 1.2h-8.1q-1.2 0-1.2-1.2v-10.4q0-1.2 1.2-1.2z" fill="url(#pg)" stroke="#5c5c5c"/><path d="M8.4 1.7v3.7h3.7" fill="#f4f4f4" stroke="#5c5c5c" stroke-width="0.9"/><circle cx="11.6" cy="12.3" r="3.1" fill="url(#rc)" stroke="#b02808" stroke-width="0.8"/></svg><span class="c0">142148595</span><span class="c1">2024.12.05 09:45:16</span><span class="c2">sell stop</span><span class="c3">1.00</span><span class="c4">usdjpy</span><span class="c5">139.793</span><span class="c6">0.000</span><span class="c7">0.000</span><span class="c8">2024.12.05 09:45:17</span><span class="c9">149.793</span><span class="c10"></span><span class="c11"></span></div>
<div class="row g" style="top:396px"><svg style="left:2px;top:2px" width="17" height="17" viewBox="0 0 17 17"><path d="M3 1.5h5.4l3.9 3.9v7.7q0 1.2-1.2 1.2h-8.1q-1.2 0-1.2-1.2v-10.4q0-1.2 1.2-1.2z" fill="url(#pg)" stroke="#5c5c5c"/><path d="M8.4 1.7v3.7h3.7" fill="#f4f4f4" stroke="#5c5c5c" stroke-width="0.9"/><circle cx="11.6" cy="12.3" r="3.1" fill="url(#rc)" stroke="#b02808" stroke-width="0.8"/></svg><span class="c0">142148593</span><span class="c1">2024.12.05 09:45:15</span><span class="c2">sell stop</span><span class="c3">1.00</span><span class="c4">usdjpy</span><span class="c5">139.815</span><span class="c6">0.000</span><span class="c7">0.000</span><span class="c8">2024.12.05 09:45:18</span><span class="c9">149.793</span><span class="c10"></span><span class="c11"></span></div>
<div class="row w" style="top:417px"><svg style="left:2px;top:2px" width="17" height="17" viewBox="0 0 17 17"><path d="M3 1.5h5.4l3.9 3.9v7.7q0 1.2-1.2 1.2h-8.1q-1.2 0-1.2-1.2v-10.4q0-1.2 1.2-1.2z" fill="url(#pg)" stroke="#5c5c5c"/><path d="M8.4 1.7v3.7h3.7" fill="#f4f4f4" stroke="#5c5c5c" stroke-width="0.9"/><circle cx="11.6" cy="12.3" r="3.1" fill="url(#bc)" stroke="#0c64a8" stroke-width="0.8"/></svg><span class="c0">142148596</span><span class="c1">2024.12.05 09:45:18</span><span class="c2">buy stop</span><span class="c3">1.00</span><span class="c4">usdjpy</span><span class="c5">159.816</span><span class="c6">0.000</span><span class="c7">0.000</span><span class="c8">2024.12.05 09:45:19</span><span class="c9">149.817</span><span class="c10"></span><span class="c11"></span></div>
<div class="row g" style="top:438px"><svg style="left:2px;top:2px" width="17" height="17" viewBox="0 0 17 17"><path d="M3 1.5h5.4l3.9 3.9v7.7q0 1.2-1.2 1.2h-8.1q-1.2 0-1.2-1.2v-10.4q0-1.2 1.2-1.2z" fill="url(#pg)" stroke="#5c5c5c"/><path d="M8.4 1.7v3.7h3.7" fill="#f4f4f4" stroke="#5c5c5c" stroke-width="0.9"/><circle cx="11.6" cy="12.3" r="3.1" fill="url(#rc)" stroke="#b02808" stroke-width="0.8"/></svg><span class="c0">142148599</span><span class="c1">2024.12.05 09:45:20</span><span class="c2">sell stop</span><span class="c3">1.00</span><span class="c4">usdjpy</span><span class="c5">139.794</span><span class="c6">0.000</span><span class="c7">0.000</span><span class="c8">2024.12.05 09:45:21</span><span class="c9">149.803</span><span class="c10"></span><span class="c11"></span></div>
<div class="row w" style="top:459px"><svg style="left:2px;top:2px" width="17" height="17" viewBox="0 0 17 17"><path d="M3 1.5h5.4l3.9 3.9v7.7q0 1.2-1.2 1.2h-8.1q-1.2 0-1.2-1.2v-10.4q0-1.2 1.2-1.2z" fill="url(#pg)" stroke="#5c5c5c"/><path d="M8.4 1.7v3.7h3.7" fill="#f4f4f4" stroke="#5c5c5c" stroke-width="0.9"/><circle cx="11.6" cy="12.3" r="3.1" fill="url(#bc)" stroke="#0c64a8" stroke-width="0.8"/></svg><span class="c0">142148598</span><span class="c1">2024.12.05 09:45:19</span><span class="c2">buy stop</span><span class="c3">1.00</span><span class="c4">usdjpy</span><span class="c5">159.817</span><span class="c6">0.000</span><span class="c7">0.000</span><span class="c8">2024.12.05 09:45:21</span><span class="c9">149.826</span><span class="c10"></span><span class="c11"></span></div>
<div class="row g" style="top:480px"><svg style="left:2px;top:2px" width="17" height="17" viewBox="0 0 17 17"><path d="M3 1.5h5.4l3.9 3.9v7.7q0 1.2-1.2 1.2h-8.1q-1.2 0-1.2-1.2v-10.4q0-1.2 1.2-1.2z" fill="url(#pg)" stroke="#5c5c5c"/><path d="M8.4 1.7v3.7h3.7" fill="#f4f4f4" stroke="#5c5c5c" stroke-width="0.9"/><circle cx="11.6" cy="12.3" r="3.1" fill="url(#rc)" stroke="#b02808" stroke-width="0.8"/></svg><span class="c0">142148597</span><span class="c1">2024.12.05 09:45:19</span><span class="c2">sell stop</span><span class="c3">1.00</span><span class="c4">usdjpy</span><span class="c5">139.793</span><span class="c6">0.000</span><span class="c7">0.000</span><span class="c8">2024.12.05 09:45:22</span><span class="c9">149.801</span><span class="c10"></span><span class="c11"></span></div>
<div class="row s" style="top:501px"><svg style="left:2px;top:2px" width="17" height="17" viewBox="0 0 17 17"><path d="M3 1.5h5.4l3.9 3.9v7.7q0 1.2-1.2 1.2h-8.1q-1.2 0-1.2-1.2v-10.4q0-1.2 1.2-1.2z" fill="url(#pg)" stroke="#5c5c5c"/><path d="M8.4 1.7v3.7h3.7" fill="#f4f4f4" stroke="#5c5c5c" stroke-width="0.9"/><circle cx="11.6" cy="12.3" r="3.1" fill="url(#rc)" stroke="#b02808" stroke-width="0.8"/></svg><span class="c0">142148603</span><span class="c1">2024.12.05 09:45:23</span><span class="c2">sell stop</span><span class="c3">1.00</span><span class="c4">usdjpy</span><span class="c5">139.798</span><span class="c6">0.000</span><span class="c7">0.000</span><span class="c8">2024.12.05 09:45:24</span><span class="c9">149.796</span><span class="c10"></span><span class="c11"></span></div>
<div class="row g" style="top:522px"><svg style="left:2px;top:2px" width="17" height="17" viewBox="0 0 17 17"><path d="M3 1.5h5.4l3.9 3.9v7.7q0 1.2-1.2 1.2h-8.1q-1.2 0-1.2-1.2v-10.4q0-1.2 1.2-1.2z" fill="url(#pg)" stroke="#5c5c5c"/><path d="M8.4 1.7v3.7h3.7" fill="#f4f4f4" stroke="#5c5c5c" stroke-width="0.9"/><circle cx="11.6" cy="12.3" r="3.1" fill="url(#bc)" stroke="#0c64a8" stroke-width="0.8"/></svg><span class="c0">142148600</span><span class="c1">2024.12.05 09:45:22</span><span class="c2">buy stop</span><span class="c3">1.00</span><span class="c4">usdjpy</span><span class="c5">159.824</span><span class="c6">0.000</span><span class="c7">0.000</span><span class="c8">2024.12.05 09:45:24</span><span class="c9">149.818</span><span class="c10"></span><span class="c11"></span></div>
<div class="row w" style="top:543px"><svg style="left:2px;top:2px" width="17" height="17" viewBox="0 0 17 17"><path d="M3 1.5h5.4l3.9 3.9v7.7q0 1.2-1.2 1.2h-8.1q-1.2 0-1.2-1.2v-10.4q0-1.2 1.2-1.2z" fill="url(#pg)" stroke="#5c5c5c"/><path d="M8.4 1.7v3.7h3.7" fill="#f4f4f4" stroke="#5c5c5c" stroke-width="0.9"/><circle cx="11.6" cy="12.3" r="3.1" fill="url(#bc)" stroke="#0c64a8" stroke-width="0.8"/></svg><span class="c0">142148602</span><span class="c1">2024.12.05 09:45:23</span><span class="c2">buy stop</span><span class="c3">1.00</span><span class="c4">usdjpy</span><span class="c5">159.821</span><span class="c6">0.000</span><span class="c7">0.000</span><span class="c8">2024.12.05 09:45:25</span><span class="c9">149.819</span><span class="c10"></span><span class="c11"></span></div>
<div class="row g" style="top:564px"><svg style="left:2px;top:2px" width="17" height="17" viewBox="0 0 17 17"><path d="M3 1.5h5.4l3.9 3.9v7.7q0 1.2-1.2 1.2h-8.1q-1.2 0-1.2-1.2v-10.4q0-1.2 1.2-1.2z" fill="url(#pg)" stroke="#5c5c5c"/><path d="M8.4 1.7v3.7h3.7" fill="#f4f4f4" stroke="#5c5c5c" stroke-width="0.9"/><circle cx="11.6" cy="12.3" r="3.1" fill="url(#rc)" stroke="#b02808" stroke-width="0.8"/></svg><span class="c0">142148601</span><span class="c1">2024.12.05 09:45:23</span><span class="c2">sell stop</span><span class="c3">1.00</span><span class="c4">usdjpy</span><span class="c5">139.801</span><span class="c6">0.000</span><span class="c7">0.000</span><span class="c8">2024.12.05 09:45:25</span><span class="c9">149.798</span><span class="c10"></span><span class="c11"></span></div>
<div class="row w" style="top:585px"><svg style="left:2px;top:2px" width="17" height="17" viewBox="0 0 17 17"><path d="M3 1.5h5.4l3.9 3.9v7.7q0 1.2-1.2 1.2h-8.1q-1.2 0-1.2-1.2v-10.4q0-1.2 1.2-1.2z" fill="url(#pg)" stroke="#5c5c5c"/><path d="M8.4 1.7v3.7h3.7" fill="#f4f4f4" stroke="#5c5c5c" stroke-width="0.9"/><circle cx="11.6" cy="12.3" r="3.1" fill="url(#bc)" stroke="#0c64a8" stroke-width="0.8"/></svg><span class="c0">142148604</span><span class="c1">2024.12.05 09:45:25</span><span class="c2">buy stop</span><span class="c3">1.00</span><span class="c4">usdjpy</span><span class="c5">159.821</span><span class="c6">0.000</span><span class="c7">0.000</span><span class="c8">2024.12.05 09:45:27</span><span class="c9">149.826</span><span class="c10"></span><span class="c11"></span></div>
<div class="row g" style="top:606px"><svg style="left:2px;top:2px" width="17" height="17" viewBox="0 0 17 17"><path d="M3 1.5h5.4l3.9 3.9v7.7q0 1.2-1.2 1.2h-8.1q-1.2 0-1.2-1.2v-10.4q0-1.2 1.2-1.2z" fill="url(#pg)" stroke="#5c5c5c"/><path d="M8.4 1.7v3.7h3.7" fill="#f4f4f4" stroke="#5c5c5c" stroke-width="0.9"/><circle cx="11.6" cy="12.3" r="3.1" fill="url(#bc)" stroke="#0c64a8" stroke-width="0.8"/></svg><span class="c0">142148606</span><span class="c1">2024.12.05 09:45:26</span><span class="c2">buy stop</span><span class="c3">1.00</span><span class="c4">usdjpy</span><span class="c5">159.823</span><span class="c6">0.000</span><span class="c7">0.000</span><span class="c8">2024.12.05 09:45:27</span><span class="c9">149.824</span><span class="c10"></span><span class="c11"></span></div>
<div class="row w" style="top:627px"><svg style="left:2px;top:2px" width="17" height="17" viewBox="0 0 17 17"><path d="M3 1.5h5.4l3.9 3.9v7.7q0 1.2-1.2 1.2h-8.1q-1.2 0-1.2-1.2v-10.4q0-1.2 1.2-1.2z" fill="url(#pg)" stroke="#5c5c5c"/><path d="M8.4 1.7v3.7h3.7" fill="#f4f4f4" stroke="#5c5c5c" stroke-width="0.9"/><circle cx="11.6" cy="12.3" r="3.1" fill="url(#rc)" stroke="#b02808" stroke-width="0.8"/></svg><span class="c0">142148607</span><span class="c1">2024.12.05 09:45:27</span><span class="c2">sell stop</span><span class="c3">1.00</span><span class="c4">usdjpy</span><span class="c5">139.800</span><span class="c6">0.000</span><span class="c7">0.000</span><span class="c8">2024.12.05 09:45:28</span><span class="c9">149.794</span><span class="c10"></span><span class="c11"></span></div>
<div class="row g" style="top:648px"><svg style="left:2px;top:2px" width="17" height="17" viewBox="0 0 17 17"><path d="M3 1.5h5.4l3.9 3.9v7.7q0 1.2-1.2 1.2h-8.1q-1.2 0-1.2-1.2v-10.4q0-1.2 1.2-1.2z" fill="url(#pg)" stroke="#5c5c5c"/><path d="M8.4 1.7v3.7h3.7" fill="#f4f4f4" stroke="#5c5c5c" stroke-width="0.9"/><circle cx="11.6" cy="12.3" r="3.1" fill="url(#rc)" stroke="#b02808" stroke-width="0.8"/></svg><span class="c0">142148605</span><span class="c1">2024.12.05 09:45:26</span><span class="c2">sell stop</span><span class="c3">1.00</span><span class="c4">usdjpy</span><span class="c5">139.798</span><span class="c6">0.000</span><span class="c7">0.000</span><span class="c8">2024.12.05 09:45:28</span><span class="c9">149.795</span><span class="c10"></span><span class="c11"></span></div>
<div class="row w" style="top:669px"><svg style="left:2px;top:2px" width="17" height="17" viewBox="0 0 17 17"><path d="M3 1.5h5.4l3.9 3.9v7.7q0 1.2-1.2 1.2h-8.1q-1.2 0-1.2-1.2v-10.4q0-1.2 1.2-1.2z" fill="url(#pg)" stroke="#5c5c5c"/><path d="M8.4 1.7v3.7h3.7" fill="#f4f4f4" stroke="#5c5c5c" stroke-width="0.9"/><circle cx="11.6" cy="12.3" r="3.1" fill="url(#rc)" stroke="#b02808" stroke-width="0.8"/></svg><span class="c0">142148609</span><span class="c1">2024.12.05 09:45:29</span><span class="c2">sell stop</span><span class="c3">1.00</span><span class="c4">usdjpy</span><span class="c5">139.794</span><span class="c6">0.000</span><span class="c7">0.000</span><span class="c8">2024.12.05 09:45:30</span><span class="c9">149.793</span><span class="c10"></span><span class="c11"></span></div>
<div class="row g" style="top:690px"><svg style="left:2px;top:2px" width="17" height="17" viewBox="0 0 17 17"><path d="M3 1.5h5.4l3.9 3.9v7.7q0 1.2-1.2 1.2h-8.1q-1.2 0-1.2-1.2v-10.4q0-1.2 1.2-1.2z" fill="url(#pg)" stroke="#5c5c5c"/><path d="M8.4 1.7v3.7h3.7" fill="#f4f4f4" stroke="#5c5c5c" stroke-width="0.9"/><circle cx="11.6" cy="12.3" r="3.1" fill="url(#bc)" stroke="#0c64a8" stroke-width="0.8"/></svg><span class="c0">142148608</span><span class="c1">2024.12.05 09:45:29</span><span class="c2">buy stop</span><span class="c3">1.00</span><span class="c4">usdjpy</span><span class="c5">159.817</span><span class="c6">0.000</span><span class="c7">0.000</span><span class="c8">2024.12.05 09:45:30</span><span class="c9">149.816</span><span class="c10"></span><span class="c11"></span></div>
<div class="row w" style="top:711px"><svg style="left:2px;top:2px" width="17" height="17" viewBox="0 0 17 17"><path d="M3 1.5h5.4l3.9 3.9v7.7q0 1.2-1.2 1.2h-8.1q-1.2 0-1.2-1.2v-10.4q0-1.2 1.2-1.2z" fill="url(#pg)" stroke="#5c5c5c"/><path d="M8.4 1.7v3.7h3.7" fill="#f4f4f4" stroke="#5c5c5c" stroke-width="0.9"/><circle cx="11.6" cy="12.3" r="3.1" fill="url(#bc)" stroke="#0c64a8" stroke-width="0.8"/></svg><span class="c0">142148610</span><span class="c1">2024.12.05 09:45:31</span><span class="c2">buy stop</span><span class="c3">1.00</span><span class="c4">usdjpy</span><span class="c5">159.815</span><span class="c6">0.000</span><span class="c7">0.000</span><span class="c8">2024.12.05 09:45:32</span><span class="c9">149.817</span><span class="c10"></span><span class="c11"></span></div>
<div class="row g" style="top:732px"><svg style="left:2px;top:2px" width="17" height="17" viewBox="0 0 17 17"><path d="M3 1.5h5.4l3.9 3.9v7.7q0 1.2-1.2 1.2h-8.1q-1.2 0-1.2-1.2v-10.4q0-1.2 1.2-1.2z" fill="url(#pg)" stroke="#5c5c5c"/><path d="M8.4 1.7v3.7h3.7" fill="#f4f4f4" stroke="#5c5c5c" stroke-width="0.9"/><circle cx="11.6" cy="12.3" r="3.1" fill="url(#rc)" stroke="#b02808" stroke-width="0.8"/></svg><span class="c0">142148611</span><span class="c1">2024.12.05 09:45:32</span><span class="c2">sell stop</span><span class="c3">1.00</span><span class="c4">usdjpy</span><span class="c5">139.792</span><span class="c6">0.000</span><span class="c7">0.000</span><span class="c8">2024.12.05 09:45:34</span><span class="c9">149.795</span><span class="c10"></span><span class="c11"></span></div>
<div class="row w" style="top:753px"><svg style="left:2px;top:2px" width="17" height="17" viewBox="0 0 17 17"><path d="M3 1.5h5.4l3.9 3.9v7.7q0 1.2-1.2 1.2h-8.1q-1.2 0-1.2-1.2v-10.4q0-1.2 1.2-1.2z" fill="url(#pg)" stroke="#5c5c5c"/><path d="M8.4 1.7v3.7h3.7" fill="#f4f4f4" stroke="#5c5c5c" stroke-width="0.9"/><circle cx="11.6" cy="12.3" r="3.1" fill="url(#bc)" stroke="#0c64a8" stroke-width="0.8"/></svg><span class="c0">142148612</span><span class="c1">2024.12.05 09:45:32</span><span class="c2">buy stop</span><span class="c3">1.00</span><span class="c4">usdjpy</span><span class="c5">159.817</span><span class="c6">0.000</span><span class="c7">0.000</span><span class="c8">2024.12.05 09:45:34</span><span class="c9">149.817</span><span class="c10"></span><span class="c11"></span></div>
<div class="row g" style="top:774px"><svg style="left:2px;top:2px" width="17" height="17" viewBox="0 0 17 17"><path d="M3 1.5h5.4l3.9 3.9v7.7q0 1.2-1.2 1.2h-8.1q-1.2 0-1.2-1.2v-10.4q0-1.2 1.2-1.2z" fill="url(#pg)" stroke="#5c5c5c"/><path d="M8.4 1.7v3.7h3.7" fill="#f4f4f4" stroke="#5c5c5c" stroke-width="0.9"/><circle cx="11.6" cy="12.3" r="3.1" fill="url(#rc)" stroke="#b02808" stroke-width="0.8"/></svg><span class="c0">142148613</span><span class="c1">2024.12.05 09:45:33</span><span class="c2">sell stop</span><span class="c3">1.00</span><span class="c4">usdjpy</span><span class="c5">139.794</span><span class="c6">0.000</span><span class="c7">0.000</span><span class="c8">2024.12.05 09:45:34</span><span class="c9">149.791</span><span class="c10"></span><span class="c11"></span></div>
<div class="row w" style="top:795px"><svg style="left:2px;top:2px" width="17" height="17" viewBox="0 0 17 17"><path d="M3 1.5h5.4l3.9 3.9v7.7q0 1.2-1.2 1.2h-8.1q-1.2 0-1.2-1.2v-10.4q0-1.2 1.2-1.2z" fill="url(#pg)" stroke="#5c5c5c"/><path d="M8.4 1.7v3.7h3.7" fill="#f4f4f4" stroke="#5c5c5c" stroke-width="0.9"/><circle cx="11.6" cy="12.3" r="3.1" fill="url(#rc)" stroke="#b02808" stroke-width="0.8"/></svg><span class="c0">142148615</span><span class="c1">2024.12.05 09:45:35</span><span class="c2">sell stop</span><span class="c3">1.00</span><span class="c4">usdjpy</span><span class="c5">139.792</span><span class="c6">0.000</span><span class="c7">0.000</span><span class="c8">2024.12.05 09:45:38</span><span class="c9">149.785</span><span class="c10"></span><span class="c11"></span></div>
<div class="row g" style="top:816px"><svg style="left:2px;top:2px" width="17" height="17" viewBox="0 0 17 17"><path d="M3 1.5h5.4l3.9 3.9v7.7q0 1.2-1.2 1.2h-8.1q-1.2 0-1.2-1.2v-10.4q0-1.2 1.2-1.2z" fill="url(#pg)" stroke="#5c5c5c"/><path d="M8.4 1.7v3.7h3.7" fill="#f4f4f4" stroke="#5c5c5c" stroke-width="0.9"/><circle cx="11.6" cy="12.3" r="3.1" fill="url(#bc)" stroke="#0c64a8" stroke-width="0.8"/></svg><span class="c0">142148616</span><span class="c1">2024.12.05 09:45:36</span><span class="c2">buy stop</span><span class="c3">1.00</span><span class="c4">usdjpy</span><span class="c5">159.809</span><span class="c6">0.000</span><span class="c7">0.000</span><span class="c8">2024.12.05 09:45:38</span><span class="c9">149.808</span><span class="c10"></span><span class="c11"></span></div>
<div class="row w" style="top:837px"><svg style="left:2px;top:2px" width="17" height="17" viewBox="0 0 17 17"><path d="M3 1.5h5.4l3.9 3.9v7.7q0 1.2-1.2 1.2h-8.1q-1.2 0-1.2-1.2v-10.4q0-1.2 1.2-1.2z" fill="url(#pg)" stroke="#5c5c5c"/><path d="M8.4 1.7v3.7h3.7" fill="#f4f4f4" stroke="#5c5c5c" stroke-width="0.9"/><circle cx="11.6" cy="12.3" r="3.1" fill="url(#rc)" stroke="#b02808" stroke-width="0.8"/></svg><span class="c0">142148617</span><span class="c1">2024.12.05 09:45:36</span><span class="c2">sell stop</span><span class="c3">1.00</span><span class="c4">usdjpy</span><span class="c5">139.786</span><span class="c6">0.000</span><span class="c7">0.000</span><span class="c8">2024.12.05 09:45:38</span><span class="c9">149.785</span><span class="c10"></span><span class="c11"></span></div>
<div class="row g" style="top:858px"><svg style="left:2px;top:2px" width="17" height="17" viewBox="0 0 17 17"><path d="M3 1.5h5.4l3.9 3.9v7.7q0 1.2-1.2 1.2h-8.1q-1.2 0-1.2-1.2v-10.4q0-1.2 1.2-1.2z" fill="url(#pg)" stroke="#5c5c5c"/><path d="M8.4 1.7v3.7h3.7" fill="#f4f4f4" stroke="#5c5c5c" stroke-width="0.9"/><circle cx="11.6" cy="12.3" r="3.1" fill="url(#bc)" stroke="#0c64a8" stroke-width="0.8"/></svg><span class="c0">142148614</span><span class="c1">2024.12.05 09:45:35</span><span class="c2">buy stop</span><span class="c3">1.00</span><span class="c4">usdjpy</span><span class="c5">159.815</span><span class="c6">0.000</span><span class="c7">0.000</span><span class="c8">2024.12.05 09:45:39</span><span class="c9">149.808</span><span class="c10"></span><span class="c11"></span></div>
<div class="row w" style="top:879px"><svg style="left:2px;top:2px" width="17" height="17" viewBox="0 0 17 17"><path d="M3 1.5h5.4l3.9 3.9v7.7q0 1.2-1.2 1.2h-8.1q-1.2 0-1.2-1.2v-10.4q0-1.2 1.2-1.2z" fill="url(#pg)" stroke="#5c5c5c"/><path d="M8.4 1.7v3.7h3.7" fill="#f4f4f4" stroke="#5c5c5c" stroke-width="0.9"/><circle cx="11.6" cy="12.3" r="3.1" fill="url(#bc)" stroke="#0c64a8" stroke-width="0.8"/></svg><span class="c0">142148618</span><span class="c1">2024.12.05 09:45:39</span><span class="c2">buy stop</span><span class="c3">1.00</span><span class="c4">usdjpy</span><span class="c5">159.807</span><span class="c6">0.000</span><span class="c7">0.000</span><span class="c8">2024.12.05 09:45:44</span><span class="c9">149.809</span><span class="c10"></span><span class="c11"></span></div>
<div class="row g" style="top:900px"><svg style="left:2px;top:2px" width="17" height="17" viewBox="0 0 17 17"><path d="M3 1.5h5.4l3.9 3.9v7.7q0 1.2-1.2 1.2h-8.1q-1.2 0-1.2-1.2v-10.4q0-1.2 1.2-1.2z" fill="url(#pg)" stroke="#5c5c5c"/><path d="M8.4 1.7v3.7h3.7" fill="#f4f4f4" stroke="#5c5c5c" stroke-width="0.9"/><circle cx="11.6" cy="12.3" r="3.1" fill="url(#rc)" stroke="#b02808" stroke-width="0.8"/></svg><span class="c0">142148619</span><span class="c1">2024.12.05 09:45:40</span><span class="c2">sell stop</span><span class="c3">1.00</span><span class="c4">usdjpy</span><span class="c5">139.784</span><span class="c6">0.000</span><span class="c7">0.000</span><span class="c8">2024.12.05 09:45:45</span><span class="c9">149.786</span><span class="c10"></span><span class="c11"></span></div>
<div style="left:10px;top:921px;width:1363px;height:20px;background:#c8c8c8"></div><svg style="left:15px;top:925px" width="12" height="12" viewBox="0 0 12 12"><circle cx="6" cy="6" r="3.6" fill="#cfcfcf" stroke="#8a8a8a" stroke-width="1"/><path d="M4 7.5L7.5 4" stroke="#f4f4f4" stroke-width="1"/></svg><svg style="position:absolute;left:32.30px;top:922.38px;overflow:visible" width="93.5" height="17.4" viewBox="0 -13.02 93.5 17.4"><text x="0" y="0" font-size="12" font-weight="bold" fill="#000">盈/亏: 13 371.50</text></svg><svg style="position:absolute;left:133.20px;top:922.38px;overflow:visible" width="69.5" height="17.4" viewBox="0 -13.02 69.5 17.4"><text x="0" y="0" font-size="12" font-weight="bold" fill="#000">信用额: 0.00</text></svg><svg style="position:absolute;left:208.00px;top:922.38px;overflow:visible" width="88.7" height="17.4" viewBox="0 -13.02 88.7 17.4"><text x="0" y="0" font-size="12" font-weight="bold" fill="#000">存款: 66 531.47</text></svg><svg style="position:absolute;left:306.30px;top:922.38px;overflow:visible" width="93.2" height="17.4" viewBox="0 -13.02 93.2 17.4"><text x="0" y="0" font-size="12" font-weight="bold" fill="#000">取款: -79 902.97</text></svg><div class="t" style="left:1255px;top:921px;width:114px;height:20px;line-height:20px;text-align:right;font-weight:bold;font-size:12.2px">0.00</div><svg style="position:absolute;left:955.00px;top:136.20px;overflow:visible" width="208.0" height="36.4" viewBox="0 -27.30 208.0 36.4"><text x="0" y="0" font-size="26" fill="#ff1a1a">直接扣除不给出金</text></svg><div style="left:10px;top:955px;width:91px;height:1px;background:#000"></div><div style="left:167px;top:955px;width:1206px;height:1px;background:#000"></div><div style="left:10px;top:956px;width:91px;height:5px;background:#f0f0f0"></div><div style="left:168px;top:956px;width:1205px;height:5px;background:#f0f0f0"></div><div style="left:101px;top:955px;width:66px;height:6px;background:#fff"></div><div style="left:100px;top:955px;width:1px;height:6px;background:#000"></div><div style="left:167px;top:955px;width:1px;height:6px;background:#000"></div><svg style="position:absolute;left:26.00px;top:956.67px;overflow:visible" width="20.6" height="14.8" viewBox="0 -11.13 20.6 14.8"><text x="0" y="0" font-size="10.3" fill="#444">交易</text></svg><svg style="position:absolute;left:67.40px;top:956.67px;overflow:visible" width="20.6" height="14.8" viewBox="0 -11.13 20.6 14.8"><text x="0" y="0" font-size="10.3" fill="#444">展示</text></svg><svg style="position:absolute;left:110.50px;top:956.67px;overflow:visible" width="41.2" height="14.8" viewBox="0 -11.13 41.2 14.8"><text x="0" y="0" font-size="10.3" font-weight="bold" fill="#000">账户历史</text></svg><svg style="position:absolute;left:180.40px;top:956.67px;overflow:visible" width="20.6" height="14.8" viewBox="0 -11.13 20.6 14.8"><text x="0" y="0" font-size="10.3" fill="#444">新闻</text></svg><svg style="position:absolute;left:224.00px;top:956.67px;overflow:visible" width="20.6" height="14.8" viewBox="0 -11.13 20.6 14.8"><text x="0" y="0" font-size="10.3" fill="#444">预警</text></svg><svg style="position:absolute;left:268.50px;top:956.67px;overflow:visible" width="20.6" height="14.8" viewBox="0 -11.13 20.6 14.8"><text x="0" y="0" font-size="10.3" fill="#444">邮箱</text></svg><svg style="position:absolute;left:319.00px;top:956.67px;overflow:visible" width="20.6" height="14.8" viewBox="0 -11.13 20.6 14.8"><text x="0" y="0" font-size="10.3" fill="#444">市场</text></svg><svg style="position:absolute;left:364.00px;top:956.67px;overflow:visible" width="20.6" height="14.8" viewBox="0 -11.13 20.6 14.8"><text x="0" y="0" font-size="10.3" fill="#444">信号</text></svg><svg style="position:absolute;left:409.60px;top:956.67px;overflow:visible" width="20.6" height="14.8" viewBox="0 -11.13 20.6 14.8"><text x="0" y="0" font-size="10.3" fill="#444">文章</text></svg><svg style="position:absolute;left:466.00px;top:956.67px;overflow:visible" width="30.9" height="14.8" viewBox="0 -11.13 30.9 14.8"><text x="0" y="0" font-size="10.3" fill="#444">代码库</text></svg><svg style="position:absolute;left:521.00px;top:956.67px;overflow:visible" width="12.7" height="14.8" viewBox="0 -11.13 12.7 14.8"><text x="0" y="0" font-size="10.3" fill="#444">EA</text></svg><svg style="position:absolute;left:557.60px;top:956.67px;overflow:visible" width="20.6" height="14.8" viewBox="0 -11.13 20.6 14.8"><text x="0" y="0" font-size="10.3" fill="#444">日志</text></svg><div style="left:56px;top:959px;width:1px;height:2px;background:#444"></div><div style="left:212px;top:959px;width:1px;height:2px;background:#444"></div><div style="left:256px;top:959px;width:1px;height:2px;background:#444"></div><div style="left:308px;top:959px;width:1px;height:2px;background:#444"></div><div style="left:352px;top:959px;width:1px;height:2px;background:#444"></div><div style="left:397px;top:959px;width:1px;height:2px;background:#444"></div><div style="left:455px;top:959px;width:1px;height:2px;background:#444"></div><div style="left:510.5px;top:959px;width:1px;height:2px;background:#444"></div><div style="left:546.5px;top:959px;width:1px;height:2px;background:#444"></div><div style="left:589.5px;top:959px;width:1px;height:2px;background:#444"></div><svg style="left:0;top:953px" width="9" height="8" viewBox="0 0 9 8"><text transform="translate(7.6,19.8) rotate(-90)" x="0" y="0" font-size="9.5" font-weight="bold" fill="#000">终端</text></svg><div class="wm" style="left:14.3px;top:74.5px">FX119</div><div class="wm" style="left:297.7px;top:74.5px">FX119</div><div class="wm" style="left:581.0px;top:74.5px">FX119</div><div class="wm" style="left:864.4px;top:74.5px">FX119</div><div class="wm" style="left:1147.7px;top:74.5px">FX119</div><div class="wm" style="left:14.3px;top:302.0px">FX119</div><div class="wm" style="left:297.7px;top:302.0px">FX119</div><div class="wm" style="left:581.0px;top:302.0px">FX119</div><div class="wm" style="left:864.4px;top:302.0px">FX119</div><div class="wm" style="left:1147.7px;top:302.0px">FX119</div><div class="wm" style="left:14.3px;top:529.5px">FX119</div><div class="wm" style="left:297.7px;top:529.5px">FX119</div><div class="wm" style="left:581.0px;top:529.5px">FX119</div><div class="wm" style="left:864.4px;top:529.5px">FX119</div><div class="wm" style="left:1147.7px;top:529.5px">FX119</div><div class="wm" style="left:14.3px;top:757.0px">FX119</div><div class="wm" style="left:297.7px;top:757.0px">FX119</div><div class="wm" style="left:581.0px;top:757.0px">FX119</div><div class="wm" style="left:864.4px;top:757.0px">FX119</div><div class="wm" style="left:1147.7px;top:757.0px">FX119</div><div class="wm" style="left:14.3px;top:984.5px">FX119</div><div class="wm" style="left:297.7px;top:984.5px">FX119</div><div class="wm" style="left:581.0px;top:984.5px">FX119</div><div class="wm" style="left:864.4px;top:984.5px">FX119</div><div class="wm" style="left:1147.7px;top:984.5px">FX119</div></body></html>
